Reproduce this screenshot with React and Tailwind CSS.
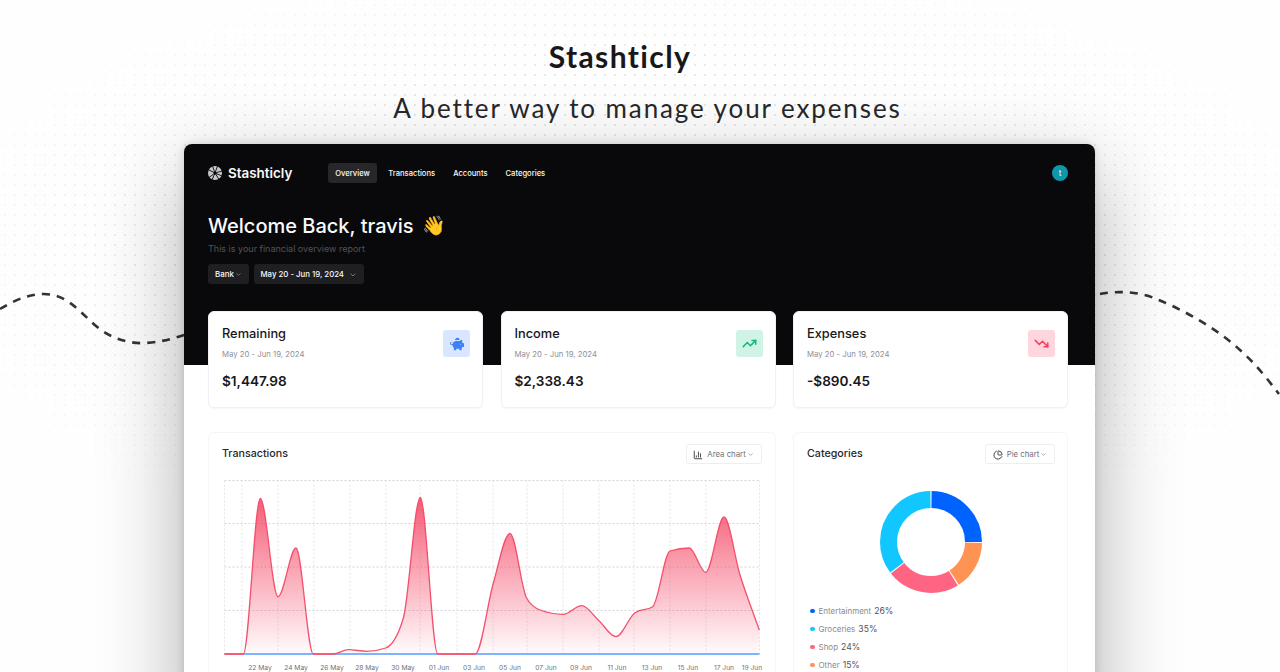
import React from "react";
import { ChevronDown, TrendingUp, TrendingDown, ChartColumn, ChartPie } from "lucide-react";
import { FaPiggyBank } from "react-icons/fa";

const inter = "font-['Inter',sans-serif]";

function Curves() {
  return (
    <svg className="absolute inset-0 z-0" width="1280" height="672" viewBox="0 0 1280 672" fill="none">
      <path
        d="M0 309 C12 302 26 294 44 294 C66 294 78 310 96 326 C110 338 128 344 146 343 C160 342 172 339 184 335"
        stroke="#333" strokeWidth="2.6" strokeDasharray="8 7"
      />
      <path
        d="M1100 294 C1116 291 1136 291 1154 298 C1184 310 1216 328 1240 350 C1256 364 1268 380 1279 394"
        stroke="#333" strokeWidth="2.6" strokeDasharray="8 7"
      />
    </svg>
  );
}

function Logo() {
  return (
    <svg width="14" height="14" viewBox="0 0 14 14">
      <circle cx="7" cy="7" r="7" fill="#c8c8c8" />
      <path d="M7 7 L4.5 0 M7 7 L14 5 M7 7 L11 13.5 M7 7 L1 11.5 M7 7 L0 3.5 M7 7 L9.5 0 M7 7 L14 10 M7 7 L4 14" stroke="#09090b" strokeWidth="0.9" />
      <circle cx="7" cy="7" r="1.5" fill="#09090b" />
    </svg>
  );
}

function Stat({ title, value, bg, icon }) {
  return (
    <div className="h-[97px] rounded-md bg-white border border-[#f1f1f3] shadow-[0_1px_2px_rgba(0,0,0,0.04)] pl-[13px] pr-[12px] pt-[13px] flex justify-between">
      <div>
        <div className="text-[12.8px] leading-[18px] font-medium text-[#18181b]">{title}</div>
        <div className="text-[7.75px] leading-[12px] mt-[4.5px] text-[#8e8e96]">May 20 - Jun 19, 2024</div>
        <div className="text-[13.6px] leading-[18px] font-semibold text-[#18181b] mt-[12.5px]">{value}</div>
      </div>
      <div className={`w-[27px] h-[27px] rounded-[3px] mt-[5px] flex items-center justify-center ${bg}`}>{icon}</div>
    </div>
  );
}

const xLabels = [
  ["22 May", 260], ["24 May", 296], ["26 May", 332], ["28 May", 367], ["30 May", 403], ["01 Jun", 439], ["03 Jun", 474],
  ["05 Jun", 510], ["07 Jun", 546], ["09 Jun", 581], ["11 Jun", 617], ["13 Jun", 652], ["15 Jun", 688], ["17 Jun", 724], ["19 Jun", 752],
];

const pts = [
  [2.5, 176], [21.3, 176], [38.3, 20.3], [56, 118.7], [74, 70], [91.3, 176], [111.3, 176], [126.3, 171.7], [144.7, 173.3],
  [163.7, 170], [181.3, 140.3], [198.3, 19.3], [215.7, 176], [253.3, 176], [271.3, 105.3], [288, 55.3], [304.7, 120.3],
  [318, 132], [341.3, 136.3], [359.7, 127.7], [376.3, 142], [394, 158.7], [413, 134.7], [430.7, 128.7], [448, 73],
  [467.3, 70], [483.7, 94.3], [502, 39], [518, 97], [537.3, 152],
];

function monotone(p) {
  const n = p.length;
  const d = [];
  for (let i = 0; i < n - 1; i++) d.push((p[i + 1][1] - p[i][1]) / (p[i + 1][0] - p[i][0]));
  const m = [d[0]];
  for (let i = 1; i < n - 1; i++) {
    if (d[i - 1] * d[i] <= 0) m.push(0);
    else {
      const s = Math.min(Math.abs(d[i - 1]), Math.abs(d[i])) * 2;
      m.push(Math.sign(d[i]) * Math.min(Math.abs((d[i - 1] + d[i]) / 2), s));
    }
  }
  m.push(d[n - 2]);
  let s = `M${p[0][0]} ${p[0][1]}`;
  for (let i = 0; i < n - 1; i++) {
    const h = (p[i + 1][0] - p[i][0]) / 3;
    s += ` C${(p[i][0] + h).toFixed(2)} ${(p[i][1] + m[i] * h).toFixed(2)} ${(p[i + 1][0] - h).toFixed(2)} ${(p[i + 1][1] - m[i + 1] * h).toFixed(2)} ${p[i + 1][0]} ${p[i + 1][1]}`;
  }
  return s;
}

function AreaChart() {
  const ox = 222;
  const line = monotone(pts);
  const area = line + " L537.3 176 L2.5 176 Z";
  const hs = [2.5, 45.5, 89, 132.5];
  const vs = [2.5, 20, 56, 92, 128, 164, 198, 235, 271, 305, 341, 377, 412, 448, 484, 537.5];
  return (
    <div className="relative h-[194px]">
      <svg className="absolute left-0 top-0" width="545" height="180" viewBox="0 0 545 180" fill="none">
        <defs>
          <linearGradient id="fillA" x1="0" y1="0" x2="0" y2="1">
            <stop offset="0%" stopColor="#f43f5e" stopOpacity="0.85" />
            <stop offset="100%" stopColor="#f43f5e" stopOpacity="0.02" />
          </linearGradient>
        </defs>
        {hs.map((y) => (
          <line key={y} x1="2.5" x2="537.5" y1={y} y2={y} stroke="#d4d4d8" strokeWidth="1" strokeDasharray="2 2" />
        ))}
        {vs.map((x) => (
          <line key={x} x1={x} x2={x} y1="2.5" y2="176" stroke="#e4e4e7" strokeWidth="1" strokeDasharray="2 2" />
        ))}
        <path d={area} fill="url(#fillA)" />
        <line x1="2.5" x2="537.5" y1="176" y2="176" stroke="#80b3ff" strokeWidth="2" />
        {[[2.5, 21], [91.3, 111.3], [215.7, 253.3]].map(([a, b]) => (
          <line key={a} x1={a} x2={b} y1="176" y2="176" stroke="#fb8296" strokeWidth="2" />
        ))}
        <path d={line} stroke="#f4506c" strokeWidth="1.3" />
      </svg>
      {xLabels.map(([t, x]) => (
        <span key={t} className="absolute top-[186px] text-[6.7px] leading-[8px] text-[#71717a] -translate-x-1/2 whitespace-nowrap" style={{ left: x - ox }}>
          {t}
        </span>
      ))}
    </div>
  );
}

function Legend({ color, name, pct }) {
  return (
    <div className="flex items-center h-[18px]">
      <span className={`w-[4.5px] h-[4.5px] rounded-full mr-[4px] ${color}`} />
      <span className="text-[8px] leading-[12px] text-[#8a8a92] mr-[3px]">{name}</span>
      <span className="text-[8.6px] leading-[12px] text-[#52525b]">{pct}</span>
    </div>
  );
}

function Donut() {
  const seg = [
    ["#0062ff", 0.2, 24.8],
    ["#ff9354", 25.3, 15.5],
    ["#ff6482", 41.2, 23.2],
    ["#12c6ff", 64.8, 35],
  ];
  return (
    <svg width="102" height="102" viewBox="0 0 102 102" fill="none">
      <g strokeWidth="17" fill="none" transform="rotate(-90 51 51)">
        {seg.map(([c, s, l]) => (
          <circle key={c} cx="51" cy="51" r="42.5" stroke={c} pathLength="100" strokeDasharray={`${l} ${100 - l}`} strokeDashoffset={-s} />
        ))}
      </g>
    </svg>
  );
}

export default function App() {
  return (
    <div className={`relative w-full h-[672px] overflow-hidden bg-[#fefefe] ${inter}`}>
      <div className="absolute inset-0 bg-[radial-gradient(circle,#d4d4d4_0.55px,transparent_0.9px)] bg-[size:10px_10px] [mask-image:radial-gradient(ellipse_760px_320px_at_640px_260px,black_55%,transparent_100%)]" />
      <Curves />
      <div className="relative z-10 flex flex-col items-center">
        <h1 className="mt-[38px] mr-[40px] text-[30px] leading-[36px] font-bold text-[#18181b] font-['Lato',sans-serif] tracking-[1.4px]">Stashticly</h1>
        <p className="mt-[17px] ml-[15px] text-[26px] leading-[34px] font-normal text-[#27272a] font-['Lato',sans-serif] tracking-[1.9px]">A better way to manage your expenses</p>
        <div className="mt-[19px] mr-[1px] w-[911px] rounded-t-lg bg-white shadow-[0_30px_85px_rgba(0,0,0,0.32),0_0_10px_rgba(0,0,0,0.14)] overflow-hidden relative">
          <div className="h-[221px] bg-[#09090b] pl-6 pr-[27px] pt-[19px]">
            <div className="flex items-center h-5">
              <Logo />
              <span className="ml-[6px] text-[13.4px] font-semibold text-[#fafafa]">Stashticly</span>
              <nav className="ml-[36px] flex items-center text-[7.6px] font-medium text-[#fafafa]">
                <span className="h-5 pt-px w-[48.5px] rounded-[3px] bg-[#27272a] flex items-center justify-center">Overview</span>
                <span className="ml-[11.5px] pt-px">Transactions</span>
                <span className="ml-[18px] pt-px">Accounts</span>
                <span className="ml-[18px] pt-px">Categories</span>
              </nav>
              <span className="ml-auto w-[16px] h-[16px] rounded-full bg-[#0e98ab] flex items-center justify-center text-[8px] text-white">t</span>
            </div>
            <h2 className="mt-[30px] text-[20px] leading-[26px] font-medium text-[#fafafa] flex items-center">
              Welcome Back, travis
              <span className="ml-[9px] text-[19px] leading-[26px] font-['Noto_Color_Emoji','Noto_Sans',sans-serif]">👋</span>
            </h2>
            <p className="mt-[4px] text-[9px] leading-[12px] text-[#52525b]">This is your financial overview report</p>
            <div className="mt-[9px] flex gap-[4.5px]">
              <span className="h-5 w-[41px] pl-[7px] pt-px rounded-[3px] bg-[#1f1f22] flex items-center text-[7.9px] font-medium text-[#fafafa]">
                Bank<ChevronDown size={7} className="ml-[1px] opacity-60" />
              </span>
              <span className="h-5 w-[110px] pl-[7px] pt-px rounded-[3px] bg-[#1f1f22] flex items-center text-[7.8px] font-medium text-[#fafafa]">
                May 20 - Jun 19, 2024<ChevronDown size={8} className="ml-[5px] opacity-60" />
              </span>
            </div>
          </div>
          <div className="pl-6 pr-[27px] -mt-[54px] relative">
            <div className="grid grid-cols-3 gap-[17.5px]">
              <Stat title="Remaining" value="$1,447.98" bg="bg-[#d9e6ff]" icon={<FaPiggyBank size={14} color="#3b82f6" />} />
              <Stat title="Income" value="$2,338.43" bg="bg-[#d0f3e5]" icon={<TrendingUp size={15} color="#10b981" strokeWidth={2.4} />} />
              <Stat title="Expenses" value="-$890.45" bg="bg-[#ffd6de]" icon={<TrendingDown size={15} color="#f43f5e" strokeWidth={2.4} />} />
            </div>
            <div className="grid grid-cols-3 gap-[17.5px] mt-[24px] h-[300px]">
              <div className="col-span-2 rounded-md border border-[#f6f6f7] px-[13px] pt-[11px]">
                <div className="flex items-center justify-between h-5">
                  <span className="text-[10.7px] font-medium text-[#27272a]">Transactions</span>
                  <span className="h-5 pt-px w-[76px] rounded-[3px] border border-[#eeeef0] flex items-center justify-center text-[7.8px] text-[#71717a]">
                    <ChartColumn size={10} color="#27272a" className="mr-[4px]" />Area chart<ChevronDown size={7} className="ml-[1px]" />
                  </span>
                </div>
                <div className="mt-[14px]"><AreaChart /></div>
              </div>
              <div className="rounded-md border border-[#f6f6f7] pl-[13px] pr-[12px] pt-[11px]">
                <div className="flex items-center justify-between h-5">
                  <span className="text-[10.7px] font-medium text-[#27272a]">Categories</span>
                  <span className="h-5 pt-px w-[70px] rounded-[3px] border border-[#eeeef0] flex items-center justify-center text-[7.8px] text-[#71717a]">
                    <ChartPie size={10} color="#27272a" className="mr-[4px]" />Pie chart<ChevronDown size={7} className="ml-[1px]" />
                  </span>
                </div>
                <div className="flex justify-center mt-[27px]"><Donut /></div>
                <div className="mt-[9px] ml-[3px]">
                  <Legend color="bg-[#0062ff]" name="Entertainment" pct="26%" />
                  <Legend color="bg-[#12c6ff]" name="Groceries" pct="35%" />
                  <Legend color="bg-[#ff6482]" name="Shop" pct="24%" />
                  <Legend color="bg-[#ff9354]" name="Other" pct="15%" />
                </div>
              </div>
            </div>
          </div>
        </div>
      </div>
    </div>
  );
}
